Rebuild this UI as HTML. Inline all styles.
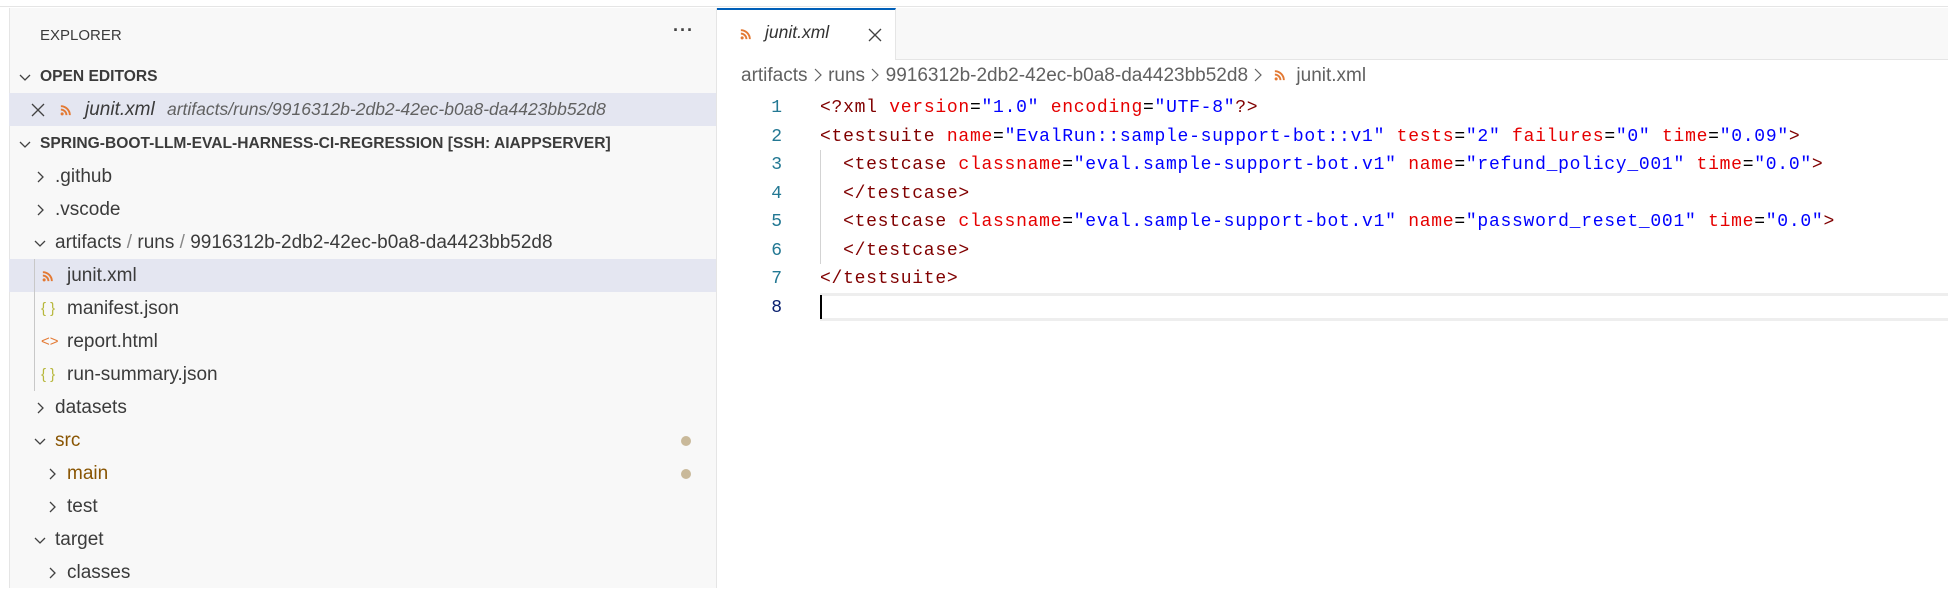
<!DOCTYPE html>
<html><head><meta charset="utf-8"><style>
*{margin:0;padding:0;box-sizing:border-box}
body{width:1948px;height:588px;overflow:hidden;background:#fff;position:relative;font-family:"Liberation Sans",sans-serif;color:#3b3b3b}
.a{position:absolute;white-space:pre}
#top{left:0;top:0;width:1948px;height:7px;background:#fff;border-bottom:1px solid #e5e5e5}
#side{left:9px;top:8px;width:708px;height:580px;background:#f8f8f8;border-left:1px solid #e5e5e5;border-right:1px solid #e5e5e5}
.row{position:absolute;left:9px;width:707px;height:33px;font-size:19px;line-height:33px;white-space:pre}
.sel{background:#e4e6f1}
.chev{position:absolute;top:0}
.mono{font-family:"Liberation Mono",monospace;font-size:18px;letter-spacing:0.73px;line-height:28.5px}
.t{color:#800000}.at{color:#e50000}.v{color:#0000ff}.p{color:#000}
.ln{position:absolute;width:30px;text-align:right;left:752px;color:#237893;font-family:"Liberation Mono",monospace;font-size:18px}
.hd{font-weight:bold;font-size:15.6px}
</style></head><body>
<div class="a" id="top"></div>
<div class="a" id="side"></div>
<svg width="0" height="0" style="position:absolute"><defs>
<symbol id="rss" viewBox="0 0 14 14"><circle cx="2.5" cy="11.5" r="1.8" fill="#e37933"/><path d="M1 6.5a6.5 6.5 0 0 1 6.5 6.5M1 2.5a10.5 10.5 0 0 1 10.5 10.5" stroke="#e37933" stroke-width="2.2" fill="none"/></symbol>
<symbol id="cr" viewBox="0 0 16 16"><path d="M6 3l5 5-5 5" stroke="#424242" stroke-width="1.3" fill="none"/></symbol>
<symbol id="cd" viewBox="0 0 16 16"><path d="M3 6l5 5 5-5" stroke="#424242" stroke-width="1.3" fill="none"/></symbol>
</defs></svg>

<div class="a" style="left:40px;top:27px;font-size:15px;color:#3b3b3b">EXPLORER</div>
<div class="a" style="left:673px;top:20px;font-size:18px;font-weight:bold;color:#424242;letter-spacing:1px">···</div>

<div class="row hd" style="top:60px"><svg class="chev" style="left:8px;top:9px" width="16" height="16"><use href="#cd"/></svg><span style="position:absolute;left:31px">OPEN EDITORS</span></div>
<div class="row sel" style="top:93px"><svg style="position:absolute;left:22px;top:10px" width="14" height="14"><path d="M1 1l12 12M13 1L1 13" stroke="#424242" stroke-width="1.3"/></svg><svg style="position:absolute;left:51px;top:11px" width="12" height="12"><use href="#rss"/></svg><span style="position:absolute;left:76px;font-style:italic">junit.xml</span><span style="position:absolute;left:158px;font-style:italic;font-size:17.5px;color:#616161">artifacts/runs/9916312b-2db2-42ec-b0a8-da4423bb52d8</span></div>
<div class="row hd" style="top:127px"><svg class="chev" style="left:8px;top:9px" width="16" height="16"><use href="#cd"/></svg><span style="position:absolute;left:31px">SPRING-BOOT-LLM-EVAL-HARNESS-CI-REGRESSION [SSH: AIAPPSERVER]</span></div>

<div class="row" style="top:160px"><svg class="chev" style="left:23px;top:9px" width="16" height="16"><use href="#cr"/></svg><span style="position:absolute;left:46px">.github</span></div>
<div class="row" style="top:193px"><svg class="chev" style="left:23px;top:9px" width="16" height="16"><use href="#cr"/></svg><span style="position:absolute;left:46px">.vscode</span></div>
<div class="row" style="top:226px"><svg class="chev" style="left:23px;top:9px" width="16" height="16"><use href="#cd"/></svg><span style="position:absolute;left:46px">artifacts<span style="color:#888"> / </span>runs<span style="color:#888"> / </span>9916312b-2db2-42ec-b0a8-da4423bb52d8</span></div>
<div class="row sel" style="top:259px"><svg style="position:absolute;left:33px;top:11px" width="12" height="12"><use href="#rss"/></svg><span style="position:absolute;left:58px">junit.xml</span></div>
<div class="row" style="top:292px"><span style="position:absolute;left:32px;color:#b7b73b;font-size:15px">{ }</span><span style="position:absolute;left:58px">manifest.json</span></div>
<div class="row" style="top:325px"><span style="position:absolute;left:32px;color:#e37933;font-size:15px">&lt;&gt;</span><span style="position:absolute;left:58px">report.html</span></div>
<div class="row" style="top:358px"><span style="position:absolute;left:32px;color:#b7b73b;font-size:15px">{ }</span><span style="position:absolute;left:58px">run-summary.json</span></div>
<div class="a" style="left:34px;top:259px;width:1px;height:132px;background:#c8c8c8"></div>
<div class="row" style="top:391px"><svg class="chev" style="left:23px;top:9px" width="16" height="16"><use href="#cr"/></svg><span style="position:absolute;left:46px">datasets</span></div>
<div class="row" style="top:424px"><svg class="chev" style="left:23px;top:9px" width="16" height="16"><use href="#cd"/></svg><span style="position:absolute;left:46px;color:#895503">src</span><span style="position:absolute;left:672px;top:12px;width:10px;height:10px;border-radius:5px;background:#c9b99a"></span></div>
<div class="row" style="top:457px"><svg class="chev" style="left:35px;top:9px" width="16" height="16"><use href="#cr"/></svg><span style="position:absolute;left:58px;color:#895503">main</span><span style="position:absolute;left:672px;top:12px;width:10px;height:10px;border-radius:5px;background:#c9b99a"></span></div>
<div class="row" style="top:490px"><svg class="chev" style="left:35px;top:9px" width="16" height="16"><use href="#cr"/></svg><span style="position:absolute;left:58px">test</span></div>
<div class="row" style="top:523px"><svg class="chev" style="left:23px;top:9px" width="16" height="16"><use href="#cd"/></svg><span style="position:absolute;left:46px">target</span></div>
<div class="row" style="top:556px"><svg class="chev" style="left:35px;top:9px" width="16" height="16"><use href="#cr"/></svg><span style="position:absolute;left:58px">classes</span></div>

<!-- editor -->
<div class="a" style="left:717px;top:8px;width:1231px;height:52px;background:#f8f8f8;border-bottom:1px solid #e5e5e5"></div>
<div class="a" style="left:717px;top:8px;width:179px;height:52px;background:#fff;border-top:2px solid #005fb8;border-right:1px solid #e5e5e5"></div>
<svg style="position:absolute;left:740px;top:28px" width="12" height="12"><use href="#rss"/></svg>
<div class="a" style="left:765px;top:22px;font-size:17.5px;font-style:italic;color:#333">junit.xml</div>
<svg style="position:absolute;left:868px;top:28px" width="14" height="14"><path d="M1 1l12 12M13 1L1 13" stroke="#424242" stroke-width="1.3"/></svg>

<div class="a" style="left:741px;top:65px;font-size:19px;color:#616161">artifacts <svg width="10" height="14" style="vertical-align:-1px"><path d="M2 1l6 6-6 6" stroke="#616161" stroke-width="1.2" fill="none"/></svg> runs <svg width="10" height="14" style="vertical-align:-1px"><path d="M2 1l6 6-6 6" stroke="#616161" stroke-width="1.2" fill="none"/></svg> 9916312b-2db2-42ec-b0a8-da4423bb52d8 <svg width="10" height="14" style="vertical-align:-1px"><path d="M2 1l6 6-6 6" stroke="#616161" stroke-width="1.2" fill="none"/></svg>  <svg width="12" height="12"><use href="#rss"/></svg>  junit.xml</div>

<div class="a" style="left:820px;top:293px;width:1128px;height:28px;border-top:3px solid #eeeeee;border-bottom:3px solid #eeeeee"></div>
<div class="a" style="left:820px;top:295px;width:2px;height:24px;background:#000"></div>
<div class="a" style="left:820px;top:150px;width:1px;height:114px;background:#d3d3d3"></div>

<div class="ln" style="top:94px;line-height:28.5px">1<br>2<br>3<br>4<br>5<br>6<br>7<br><span style="color:#0b216f">8</span></div>
<div class="a mono" style="left:820px;top:94px"><span class="t">&lt;?xml</span> <span class="at">version</span><span class="p">=</span><span class="v">"1.0"</span> <span class="at">encoding</span><span class="p">=</span><span class="v">"UTF-8"</span><span class="t">?&gt;</span>
<span class="t">&lt;testsuite</span> <span class="at">name</span><span class="p">=</span><span class="v">"EvalRun::sample-support-bot::v1"</span> <span class="at">tests</span><span class="p">=</span><span class="v">"2"</span> <span class="at">failures</span><span class="p">=</span><span class="v">"0"</span> <span class="at">time</span><span class="p">=</span><span class="v">"0.09"</span><span class="t">&gt;</span>
  <span class="t">&lt;testcase</span> <span class="at">classname</span><span class="p">=</span><span class="v">"eval.sample-support-bot.v1"</span> <span class="at">name</span><span class="p">=</span><span class="v">"refund_policy_001"</span> <span class="at">time</span><span class="p">=</span><span class="v">"0.0"</span><span class="t">&gt;</span>
  <span class="t">&lt;/testcase&gt;</span>
  <span class="t">&lt;testcase</span> <span class="at">classname</span><span class="p">=</span><span class="v">"eval.sample-support-bot.v1"</span> <span class="at">name</span><span class="p">=</span><span class="v">"password_reset_001"</span> <span class="at">time</span><span class="p">=</span><span class="v">"0.0"</span><span class="t">&gt;</span>
  <span class="t">&lt;/testcase&gt;</span>
<span class="t">&lt;/testsuite&gt;</span></div>
</body></html>
